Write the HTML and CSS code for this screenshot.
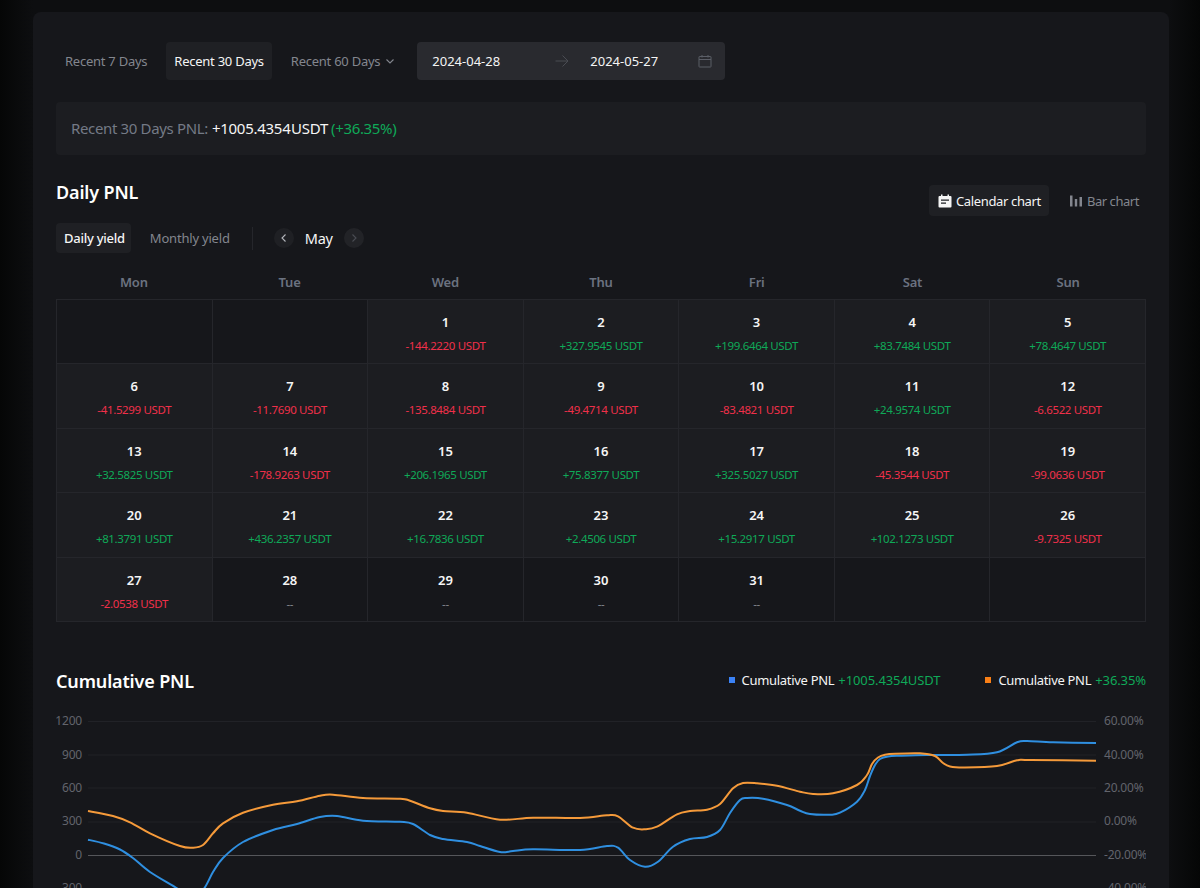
FILE: index.html
```html
<!DOCTYPE html>
<html lang="en">
<head>
<meta charset="utf-8">
<title>PNL Analysis</title>
<link rel="stylesheet" href="styles.css">
</head>
<body>
<main class="page">
<div class="card">
  <div class="range-row">
    <button class="tab">Recent 7 Days</button>
    <button class="tab active">Recent 30 Days</button>
    <button class="tab">Recent 60 Days
      <svg class="chev" width="10" height="10" viewBox="0 0 10 10"><path d="M1.5 3.5 5 7l3.5-3.5" fill="none" stroke="currentColor" stroke-width="1.1"/></svg>
    </button>
    <div class="picker">
      <span class="date">2024-04-28</span>
      <svg class="arrow" width="14" height="14" viewBox="0 0 14 14"><path d="M0.5 7H13M7.5 1.5 13 7l-5.500 5.500" fill="none" stroke="currentColor" stroke-width="1"/></svg>
      <span class="date end">2024-05-27</span>
      <svg class="cal-o" width="14" height="14" viewBox="0 0 14 14"><path d="M1.500 2.500h11a.5.5 0 0 1 .5.500v9.500a.5.5 0 0 1-.5.500h-11a.5.5 0 0 1-.5-.5V3a.5.5 0 0 1 .5-.5ZM1 5.500h12M4 1v2.500M10 1v2.500" fill="none" stroke="currentColor" stroke-width="1"/></svg>
    </div>
  </div>

  <div class="summary">
    <span class="muted">Recent 30 Days PNL:</span>
    <span class="white amount">+1005.4354 USDT</span>
    <span class="green">(+36.35%)</span>
  </div>

  <div class="daily-head">
    <h2 class="title">Daily PNL</h2>
    <div class="chart-switch">
      <button class="tab active tab-icon">
        <svg width="14" height="14" viewBox="0 0 14 14"><path fill="currentColor" d="M3 0.500h1.500V2h5V0.500H11V2h1.500A1 1 0 0 1 13.500 3v9.500a1 1 0 0 1-1 1h-11a1 1 0 0 1-1-1V3a1 1 0 0 1 1-1H3Z"/><path fill="#1f2024" d="M3 5.500h8v1.300H3ZM3 8.500h5v1.300H3Z"/></svg>
        Calendar chart
      </button>
      <button class="tab tab-icon">
        <svg width="14" height="14" viewBox="0 0 14 14"><path fill="currentColor" d="M1 1.500h2.500v11H1ZM5.800 5h2.400v7.500H5.800ZM10.500 3h2.500v9.500h-2.500Z"/></svg>
        Bar chart
      </button>
    </div>
  </div>

  <div class="yield-row">
    <button class="tab small active">Daily yield</button>
    <button class="tab small">Monthly yield</button>
    <span class="divider"></span>
    <button class="round"><svg width="10" height="10" viewBox="0 0 10 10"><path d="M6.500 1.500 3 5l3.500 3.500" fill="none" stroke="currentColor" stroke-width="1.100"/></svg></button>
    <span class="month">May</span>
    <button class="round off"><svg width="10" height="10" viewBox="0 0 10 10"><path d="M3.500 1.500 7 5 3.500 8.500" fill="none" stroke="currentColor" stroke-width="1.100"/></svg></button>
  </div>

  <div class="week">
    <span>Mon</span><span>Tue</span><span>Wed</span><span>Thu</span><span>Fri</span><span>Sat</span><span>Sun</span>
  </div>
  <div class="cal">
    <div class="cell"></div>
    <div class="cell"></div>
    <div class="cell on"><b>1</b><span class="red">-144.2220 USDT</span></div>
    <div class="cell on"><b>2</b><span class="green">+327.9545 USDT</span></div>
    <div class="cell on"><b>3</b><span class="green">+199.6464 USDT</span></div>
    <div class="cell on"><b>4</b><span class="green">+83.7484 USDT</span></div>
    <div class="cell on"><b>5</b><span class="green">+78.4647 USDT</span></div>
    <div class="cell on"><b>6</b><span class="red">-41.5299 USDT</span></div>
    <div class="cell on"><b>7</b><span class="red">-11.7690 USDT</span></div>
    <div class="cell on"><b>8</b><span class="red">-135.8484 USDT</span></div>
    <div class="cell on"><b>9</b><span class="red">-49.4714 USDT</span></div>
    <div class="cell on"><b>10</b><span class="red">-83.4821 USDT</span></div>
    <div class="cell on"><b>11</b><span class="green">+24.9574 USDT</span></div>
    <div class="cell on"><b>12</b><span class="red">-6.6522 USDT</span></div>
    <div class="cell on"><b>13</b><span class="green">+32.5825 USDT</span></div>
    <div class="cell on"><b>14</b><span class="red">-178.9263 USDT</span></div>
    <div class="cell on"><b>15</b><span class="green">+206.1965 USDT</span></div>
    <div class="cell on"><b>16</b><span class="green">+75.8377 USDT</span></div>
    <div class="cell on"><b>17</b><span class="green">+325.5027 USDT</span></div>
    <div class="cell on"><b>18</b><span class="red">-45.3544 USDT</span></div>
    <div class="cell on"><b>19</b><span class="red">-99.0636 USDT</span></div>
    <div class="cell on"><b>20</b><span class="green">+81.3791 USDT</span></div>
    <div class="cell on"><b>21</b><span class="green">+436.2357 USDT</span></div>
    <div class="cell on"><b>22</b><span class="green">+16.7836 USDT</span></div>
    <div class="cell on"><b>23</b><span class="green">+2.4506 USDT</span></div>
    <div class="cell on"><b>24</b><span class="green">+15.2917 USDT</span></div>
    <div class="cell on"><b>25</b><span class="green">+102.1273 USDT</span></div>
    <div class="cell on"><b>26</b><span class="red">-9.7325 USDT</span></div>
    <div class="cell on"><b>27</b><span class="red">-2.0538 USDT</span></div>
    <div class="cell"><b>28</b><span class="dash">--</span></div>
    <div class="cell"><b>29</b><span class="dash">--</span></div>
    <div class="cell"><b>30</b><span class="dash">--</span></div>
    <div class="cell"><b>31</b><span class="dash">--</span></div>
    <div class="cell"></div>
    <div class="cell"></div>
  </div>

  <div class="cum-head">
    <h2 class="title">Cumulative PNL</h2>
    <div class="legend">
      <span class="leg"><i class="sw blue"></i><span class="white">Cumulative PNL</span> <span class="green">+1005.4354 USDT</span></span>
      <span class="leg"><i class="sw orange"></i><span class="white">Cumulative PNL</span> <span class="green">+36.35%</span></span>
    </div>
  </div>

  <svg class="chart" width="1090" height="240" viewBox="56 708 1090 240">
    <g class="grid">
      <path d="M88 721.500H1096M88 755H1096M88 788H1096M88 822H1096M88 888.500H1096M88 922H1096"/>
    </g>
    <path class="zero" d="M88 855.500H1096"/>
    <g class="ax">
      <text x="82" y="725" text-anchor="end">1200</text>
      <text x="82" y="759" text-anchor="end">900</text>
      <text x="82" y="792" text-anchor="end">600</text>
      <text x="82" y="825" text-anchor="end">300</text>
      <text x="82" y="859" text-anchor="end">0</text>
      <text x="82" y="892" text-anchor="end">-300</text>
      <text x="1104" y="725">60.00%</text>
      <text x="1104" y="759">40.00%</text>
      <text x="1104" y="792">20.00%</text>
      <text x="1104" y="825">0.00%</text>
      <text x="1104" y="859">-20.00%</text>
      <text x="1104" y="892">-40.00%</text>
    </g>
    <path id="line-blue" class="line lb"/>
    <path id="line-orange" class="line lo"/>
  </svg>
</div>
</main>
<script src="chart.js"></script>
</body>
</html>
```
FILE: styles.css
```css
* { box-sizing: border-box; }
html, body { margin: 0; height: 888px; overflow: hidden; }
body {
  background: linear-gradient(90deg, #050606 0, #0d0e10 33px, #0d0e10 1169px, #050606 1200px);
  font-family: "Noto Sans", "Open Sans", sans-serif;
  font-size: 13px;
  color: #fff;
}
button { font: inherit; border: 0; background: none; cursor: pointer; }
.page { padding: 12px 31px 0 33px; }
.card {
  background: #16171b;
  border-radius: 8px;
  padding: 30px 23px 40px;
  height: 1100px;
}
.range-row { display: flex; align-items: center; height: 38px; padding-left: 1px; }
.tab {
  height: 38px;
  padding: 0 8px;
  color: #83868e;
  border-radius: 4px;
  display: inline-flex;
  align-items: center;
  gap: 5px;
  white-space: nowrap;
  letter-spacing: -0.25px;
}
.tab.active { background: #1f2024; color: #f5f5f5; }
.range-row .tab + .tab { margin-left: 11px; }
.picker {
  margin-left: 14px;
  width: 308px;
  height: 38px;
  background: #292a2f;
  border-radius: 4px;
  display: flex;
  align-items: center;
  padding: 0 13px 0 15px;
  color: #f5f5f5;
}
.date { flex: none; width: 123px; }
.date.end { width: auto; }
.arrow { flex: none; color: #4a4c53; margin-right: 21px; }
.cal-o { flex: none; color: #5b5e67; margin-left: auto; }
.summary {
  margin-top: 22px;
  height: 53px;
  background: #1c1d21;
  border-radius: 4px;
  padding: 0 15px 1px;
  display: flex;
  align-items: center;
  gap: 4px;
  font-size: 15px;
  letter-spacing: -0.35px;
}
.summary .amount { letter-spacing: -0.27px; word-spacing: -3px; margin-right: -1px; }
.muted { color: #747a86; }
.white { color: #f5f5f5; }
.green { color: #0fa958; }
.red { color: #f0304a; }
.daily-head {
  margin-top: 22px;
  height: 39px;
  display: flex;
  justify-content: space-between;
  align-items: flex-start;
}
.title {
  margin: 0;
  font-size: 18px;
  font-weight: 600;
  line-height: 30px;
  color: #fff;
  letter-spacing: -0.15px;
}
.chart-switch { display: flex; gap: 12px; margin-top: 8px; }
.chart-switch .tab { height: 31px; padding: 0 7px 0 8px; gap: 4px; letter-spacing: -0.45px; }
.chart-switch .tab.active { padding: 0 8px 0 9px; letter-spacing: -0.35px; }
.yield-row { margin-top: 7px; height: 30px; display: flex; align-items: center; }
.tab.small { height: 30px; padding: 0 6px 0 8px; font-weight: 500; }
.tab.small + .tab.small { margin-left: 11px; font-weight: 400; letter-spacing: -0.2px; }
.divider { width: 1px; height: 23px; background: #25262b; margin: 0 21px 0 16px; }
.round {
  width: 20px; height: 20px;
  border-radius: 50%;
  background: #1f2024;
  color: #b5b7bd;
  padding: 0;
  display: inline-flex;
  align-items: center;
  justify-content: center;
}
.round.off { color: #4a4c53; background: #222327; }
.month { font-size: 14.5px; width: 28px; margin: 0 11px; color: #f5f5f5; letter-spacing: -0.2px; white-space: nowrap; }
.week {
  display: grid;
  grid-template-columns: repeat(7, 1fr);
  height: 46px;
  text-align: center;
  color: #6b7280;
  font-weight: 600;
  line-height: 58px;
  letter-spacing: -0.2px;
}
.cal {
  display: grid;
  grid-template-columns: repeat(7, 1fr);
  grid-auto-rows: 64.400px;
  border-top: 1px solid #25262b;
  border-left: 1px solid #25262b;
}
.cell {
  border-right: 1px solid #25262b;
  border-bottom: 1px solid #25262b;
  display: flex;
  flex-direction: column;
  align-items: center;
  padding-top: 12px;
}
.cell.on { background: #1c1d21; }
.cell b { font-size: 13px; font-weight: 600; line-height: 20px; color: #f5f5f5; }
.cell span { font-size: 11.5px; line-height: 16px; margin-top: 6px; letter-spacing: -0.35px; }
.cell .dash { color: #83868e; }
.cum-head {
  margin-top: 44px;
  height: 42px;
  display: flex;
  justify-content: space-between;
  align-items: flex-start;
}
.legend { display: flex; gap: 45px; margin-top: 3px; letter-spacing: -0.3px; }
.leg { display: inline-flex; align-items: center; gap: 4px; line-height: 22px; }
.leg .green { letter-spacing: -0.1px; word-spacing: -3.2px; }
.sw { width: 6px; height: 6px; display: inline-block; margin-right: 3px; }
.sw.blue { background: #3b82f6; }
.sw.orange { background: #f97f16; }
.chart { display: block; }
.grid path { stroke: #212227; stroke-width: 1; fill: none; }
.zero { stroke: #55565a; stroke-width: 1; fill: none; }
.ax text { fill: #62646c; font-size: 12px; font-family: "Noto Sans", sans-serif; letter-spacing: -0.2px; }
.line { fill: none; stroke-width: 2; stroke-linejoin: round; }
.lb { stroke: #2f8fe0; }
.lo { stroke: #f59a3a; }
```
FILE: chart.js
```js
var blue = [[88,839.7],[104,843.5],[120,849.5],[133,858],[150,872],[177,888.3],[190,897],[203,890],[213,872],[223,858],[243,842],[273,830],[297,824],[320,817],[337,816],[363,820.7],[400,821.8],[413,824],[430,835],[443,839],[467,842],[480,846],[500,852],[513,851],[533,849.3],[580,850],[607,846],[618,847.7],[630,860],[645,866.7],[658,861.7],[673,846.7],[690,839],[707,837],[720,830],[730,813],[740,800],[747,798],[763,798.7],[787,805],[800,810.7],[810,814],[830,814.7],[840,812.7],[857,801.7],[865,790],[870,776],[875,765],[880,759],[888,756.5],[900,755.7],[927,755],[967,754.7],[997,752.3],[1017,742.3],[1027,741],[1053,742.3],[1096,743]];
var orange = [[88,811],[113,816],[130,822.3],[150,833.3],[180,846],[193,847.7],[203,845],[213,833.3],[223,823.3],[243,812.7],[273,804.7],[297,801.3],[320,795.7],[333,794.7],[363,798],[400,798.8],[410,800.7],[430,808.3],[443,811],[467,812.7],[500,819.7],[533,817.7],[580,818],[607,815.3],[618,816.3],[633,827.7],[645,829.3],[657,826.7],[677,814.3],[690,811],[707,809.7],[720,804],[733,788.3],[743,783],[757,783.3],[777,785.7],[800,791.7],[813,794],[833,793.3],[857,785],[867,775],[872,764],[878,757.5],[885,754.8],[895,753.8],[920,753.3],[935,756],[943,763],[950,766.5],[965,767.5],[997,766],[1017,760.3],[1030,760],[1096,760.7]];

function smooth(pts) {
  var d = "M" + pts[0].join(" ");
  for (var i = 0; i < pts.length - 1; i++) {
    var p0 = pts[Math.max(i - 1, 0)], p1 = pts[i], p2 = pts[i + 1], p3 = pts[Math.min(i + 2, pts.length - 1)];
    var c1x = p1[0] + (p2[0] - p0[0]) / 6, c1y = p1[1] + (p2[1] - p0[1]) / 6;
    var c2x = p2[0] - (p3[0] - p1[0]) / 6, c2y = p2[1] - (p3[1] - p1[1]) / 6;
    d += "C" + [c1x, c1y, c2x, c2y, p2[0], p2[1]].map(function (n) { return n.toFixed(1); }).join(" ");
  }
  return d;
}
document.getElementById("line-blue").setAttribute("d", smooth(blue));
document.getElementById("line-orange").setAttribute("d", smooth(orange));
```
